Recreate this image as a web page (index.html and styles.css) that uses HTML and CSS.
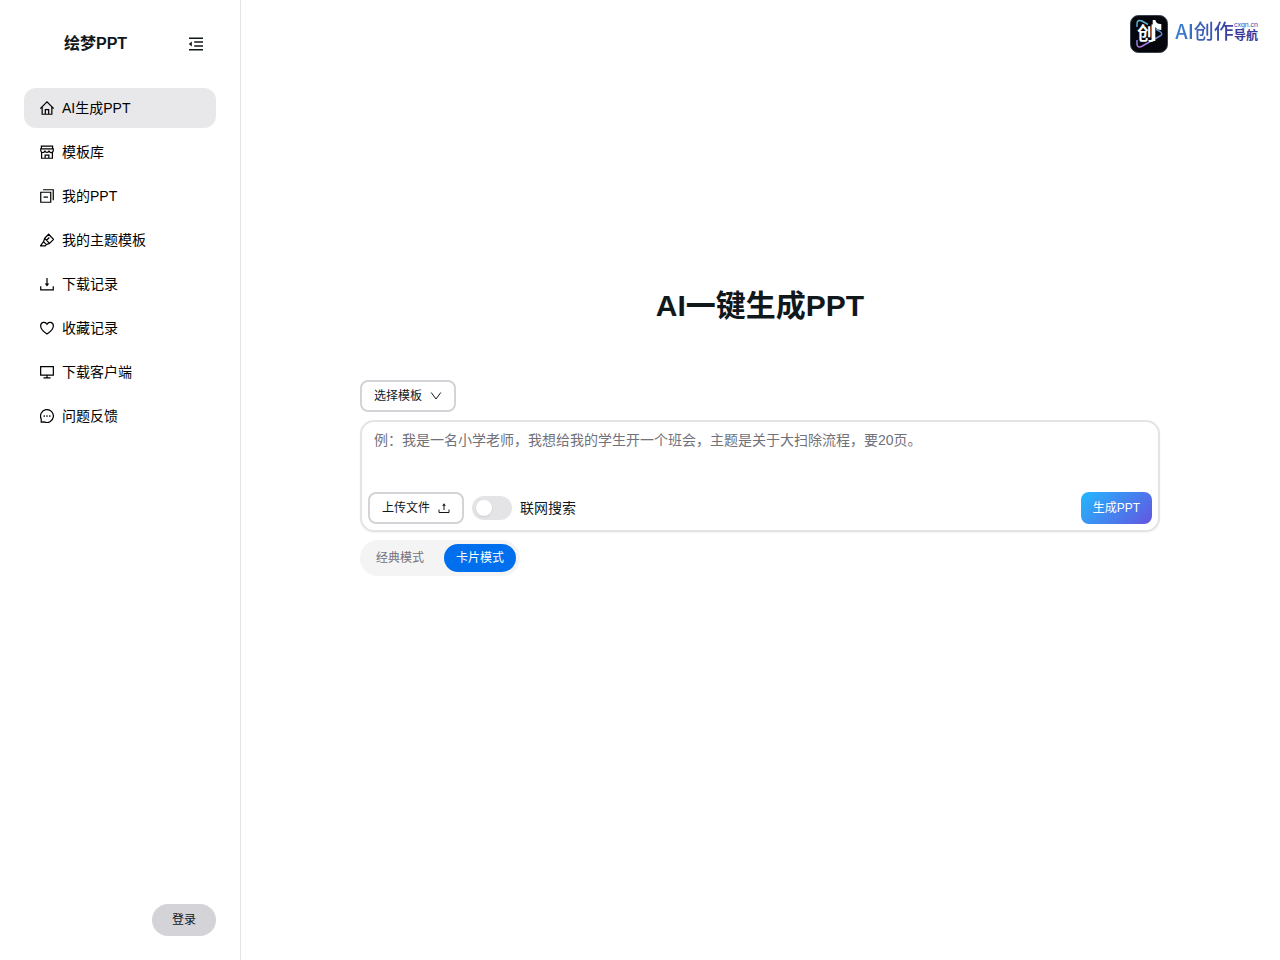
FILE: index.html
```html
<!DOCTYPE html>
<html lang="zh-CN">
<head>
    <meta charset="UTF-8">
    <meta name="viewport" content="width=device-width, initial-scale=1.0">
    <title>绘梦PPT</title>
    <link rel="stylesheet" href="styles.css">
</head>
<body>
    <div class="layout">
        <aside class="sidebar">
            <div class="brand">
                <span class="brand-name">绘梦PPT</span>
                <button class="fold-btn" type="button" aria-label="收起菜单">
                    <svg class="icon-lg" viewBox="0 0 16 16"><path d="M1 2.200h14M6.200 6h8.800M6.200 10h8.800M1 13.800h14"/><path class="solid" d="M3.800 5.500v5L.8 8z"/></svg>
                </button>
            </div>
            <nav class="menu">
                <a class="menu-item active" href="#">
                    <svg class="icon" viewBox="0.5 0.5 15 15"><path d="M.8 8.700 8 1.500l7.200 7.200M2.800 7v7.700h10.400V7M6.200 14.700V9.800h3.600v4.900"/></svg>
                    AI生成PPT
                </a>
                <a class="menu-item" href="#">
                    <svg class="icon" viewBox="0.5 0.5 15 15"><path d="M2 1.700h12v3H2zM1.300 4.700h13.400v1.500a2.200 2.200 0 0 1-4.500.3 2.300 2.300 0 0 1-4.500 0 2.200 2.200 0 0 1-4.400-.3zM2.200 8.600v6.100h11.600V8.600M6 14.700v-3.400h4v3.400"/></svg>
                    模板库
                </a>
                <a class="menu-item" href="#">
                    <svg class="icon" viewBox="0.5 0.5 15 15"><path d="M1.300 4h10.700v10.700H1.300zM3.800 1.300h10.900v11.200M4.300 9.300h4.700"/></svg>
                    我的PPT
                </a>
                <a class="menu-item" href="#">
                    <svg class="icon" viewBox="0.5 0.5 15 15"><path d="M9.800 1.800 15 7.300l-4.300 4.300-5.200-5.400zM5.500 6.200 4.300 9.800l3 3.100 3.400-1.300M4.300 9.800 1 14.200h5.200l1.100-1.300M7.500 8.300l3-3"/></svg>
                    我的主题模板
                </a>
                <a class="menu-item" href="#">
                    <svg class="icon" viewBox="0.5 0.5 15 15"><path d="M1.300 10.500v3.900h13.400v-3.900M8 1.500v7.500"/><path class="solid" d="M5.600 7.500h4.800L8 10.800z"/></svg>
                    下载记录
                </a>
                <a class="menu-item" href="#">
                    <svg class="icon" viewBox="0.5 0.5 15 15"><path d="M8 14.400C4.500 12.200 1.200 9.200 1.200 5.900c0-4.400 5-5.200 6.800-2 1.800-3.200 6.800-2.400 6.800 2 0 3.300-3.300 6.300-6.800 8.500z"/></svg>
                    收藏记录
                </a>
                <a class="menu-item" href="#">
                    <svg class="icon" viewBox="0.5 0.5 15 15"><path d="M1.200 2.300h13.600v9H1.200zM8 11.300V14M4.200 14.200h7.600"/></svg>
                    下载客户端
                </a>
                <a class="menu-item" href="#">
                    <svg class="icon" viewBox="0.5 0.5 15 15"><path d="M1.800 14.500v-3.300A6.900 6.900 0 1 1 5 14.300z"/><circle class="dot" cx="5" cy="8" r=".9"/><circle class="dot" cx="8" cy="8" r=".9"/><circle class="dot" cx="11" cy="8" r=".9"/></svg>
                    问题反馈
                </a>
            </nav>
            <button class="login-btn" type="button">登录</button>
        </aside>

        <main class="main">
            <a class="partner" href="#">
                <svg class="partner-logo" viewBox="0 0 38 38">
                    <defs>
                        <linearGradient id="play" x1="0" y1="0" x2="0" y2="1">
                            <stop offset="0" stop-color="#5bb8cc"/>
                            <stop offset=".5" stop-color="#5a8bd0"/>
                            <stop offset="1" stop-color="#b77be6"/>
                        </linearGradient>
                    </defs>
                    <rect x=".5" y=".5" width="37" height="37" rx="8" fill="#05070c" stroke="#39424c"/>
                    <path d="M7 12V9q0-5 5-3l6 3.500M7 25v4q0 4 4.500 2.500L30 21q3.500-2 0-4.500L26 14" fill="none" stroke="url(#play)" stroke-width="1.500"/>
                    <text class="partner-mark" x="7" y="25">创</text>
                    <path d="M22.700 5h2.600q1 4.500 6 4v6q-4 0-6-3v14h-2.600z" fill="#fff" stroke="none"/>
                </svg>
                <span class="partner-name">AI创作</span>
                <span class="partner-side">
                    <span class="partner-site">cxgn.cn</span>
                    <span class="partner-nav">导航</span>
                </span>
            </a>

            <section class="creator">
                <h1 class="title">AI一键生成PPT</h1>
                <button class="btn btn-bordered" type="button">
                    选择模板
                    <svg class="icon-sm" viewBox="0 0 12 12"><path d="M1.200 2.500 6 9l4.800-6.500"/></svg>
                </button>
                <form class="prompt">
                    <textarea class="prompt-input" aria-label="主题描述" placeholder="例：我是一名小学老师，我想给我的学生开一个班会，主题是关于大扫除流程，要20页。"></textarea>
                    <div class="prompt-bar">
                        <button class="btn btn-bordered" type="button">
                            上传文件
                            <svg class="icon-sm" viewBox="0 0 12 12"><path d="M1 7.500v3h10v-3M6 8V3"/><path class="solid" d="M4.200 3.700h3.600L6 1.200z"/></svg>
                        </button>
                        <label class="switch">
                            <input class="switch-input" type="checkbox" role="switch">
                            联网搜索
                        </label>
                        <button class="btn btn-primary" type="button">生成PPT</button>
                    </div>
                </form>
                <div class="tabs" role="tablist">
                    <button class="tab" type="button" role="tab" aria-selected="false">经典模式</button>
                    <button class="tab tab-selected" type="button" role="tab" aria-selected="true">卡片模式</button>
                </div>
            </section>
        </main>
    </div>
</body>
</html>
```
FILE: styles.css
```css
* {
    box-sizing: border-box;
}
body {
    margin: 0;
    font-family: "Liberation Sans", "Noto Sans CJK SC", sans-serif;
    font-size: 14px;
    line-height: 20px;
    color: #11181c;
    background-color: #fff;
}
button, textarea {
    font-family: inherit;
    color: inherit;
}
button {
    border: 0;
    cursor: pointer;
}
svg {
    fill: none;
    stroke: currentColor;
    flex-shrink: 0;
}
.layout {
    display: flex;
    min-height: 100vh;
}

/* sidebar */
.sidebar {
    display: flex;
    flex-direction: column;
    width: 240px;
    flex-shrink: 0;
    padding: 24px;
    box-shadow: 1px 0 0 #e4e4e7;
}
.brand {
    display: flex;
    align-items: center;
    justify-content: space-between;
    height: 40px;
    padding-left: 40px;
    margin-bottom: 24px;
}
.brand-name {
    font-size: 16px;
    line-height: 24px;
    font-weight: bold;
}
.fold-btn {
    display: flex;
    align-items: center;
    justify-content: center;
    width: 40px;
    height: 40px;
    padding: 0;
    background: none;
}
.menu {
    display: flex;
    flex-direction: column;
    gap: 4px;
}
.menu-item {
    display: flex;
    align-items: center;
    gap: 8px;
    height: 40px;
    padding: 0 16px;
    border-radius: 12px;
    color: #000;
    text-decoration: none;
}
.menu-item.active {
    background-color: #e8e8ea;
}
.icon {
    width: 14px;
    height: 14px;
    stroke-width: 1.3;
}
.icon-lg {
    width: 16px;
    height: 16px;
    stroke-width: 1.5;
}
.icon-sm {
    width: 12px;
    height: 12px;
}
.solid, .dot {
    fill: currentColor;
    stroke: none;
}
.login-btn {
    align-self: flex-end;
    width: 64px;
    height: 32px;
    margin-top: auto;
    border-radius: 16px;
    background-color: #d4d4d8;
    font-size: 12px;
    line-height: 16px;
}

/* main */
.main {
    position: relative;
    flex: 1;
    display: flex;
    justify-content: center;
    padding: 288px 24px 24px;
}
.partner {
    position: absolute;
    top: 15px;
    right: 22px;
    display: flex;
    color: #3d4db3;
    text-decoration: none;
}
.partner-logo {
    width: 38px;
    height: 38px;
    margin-right: 7px;
}
.partner-mark {
    font-size: 18px;
    font-weight: bold;
    fill: #fff;
    stroke: none;
}
.partner-name {
    font-family: "Noto Sans CJK SC", sans-serif;
    font-size: 20px;
    font-weight: 500;
    line-height: 32px;
    background-image: linear-gradient(90deg, #3b82d0, #3a3a9c);
    background-clip: text;
    color: transparent;
}
.partner-side {
    display: flex;
    flex-direction: column;
    padding-top: 6px;
}
.partner-site {
    font-size: 7px;
    line-height: 8px;
}
.partner-nav {
    font-size: 12px;
    line-height: 14px;
    font-weight: bold;
    color: #37379a;
}
.creator {
    display: flex;
    flex-direction: column;
    align-items: flex-start;
    gap: 8px;
    width: 100%;
    max-width: 800px;
}
.title {
    align-self: center;
    margin: 0 0 48px;
    font-size: 30px;
    line-height: 36px;
}
.btn {
    display: flex;
    align-items: center;
    gap: 8px;
    height: 32px;
    padding: 0 12px;
    border-radius: 8px;
    font-size: 12px;
    line-height: 16px;
}
.btn-bordered {
    border: 2px solid #d4d4d8;
    background-color: #fff;
}
.btn-primary {
    margin-left: auto;
    color: #fff;
    background-image: linear-gradient(135deg, #22b8ff, #6454e0);
}
.prompt {
    width: 100%;
    border: 2px solid #e4e4e7;
    border-radius: 14px;
    box-shadow: 0 1px 2px rgba(0, 0, 0, 0.05);
}
.prompt-input {
    display: block;
    width: 100%;
    height: 70px;
    padding: 8px 12px;
    border: 0;
    outline: 0;
    resize: none;
    background: none;
    font-size: 14px;
    line-height: 20px;
}
.prompt-input::placeholder {
    color: #71717a;
}
.prompt-bar {
    display: flex;
    align-items: center;
    gap: 8px;
    padding: 0 6px 6px;
}
.switch {
    display: flex;
    align-items: center;
    gap: 8px;
}
.switch-input {
    appearance: none;
    display: flex;
    align-items: center;
    width: 40px;
    height: 24px;
    margin: 0;
    padding: 0 4px;
    border-radius: 12px;
    background-color: #e4e4e7;
}
.switch-input::before {
    content: "";
    width: 16px;
    height: 16px;
    border-radius: 50%;
    background-color: #fff;
    box-shadow: 0 1px 2px rgba(0, 0, 0, 0.1);
}
.switch-input:checked {
    justify-content: flex-end;
    background-color: #006fee;
}
.tabs {
    display: flex;
    gap: 8px;
    padding: 4px;
    border-radius: 18px;
    background-color: #f4f4f5;
}
.tab {
    height: 28px;
    padding: 0 12px;
    border-radius: 14px;
    background: none;
    font-size: 12px;
    line-height: 16px;
    color: #71717a;
}
.tab-selected {
    color: #fff;
    background-color: #006fee;
}
```
